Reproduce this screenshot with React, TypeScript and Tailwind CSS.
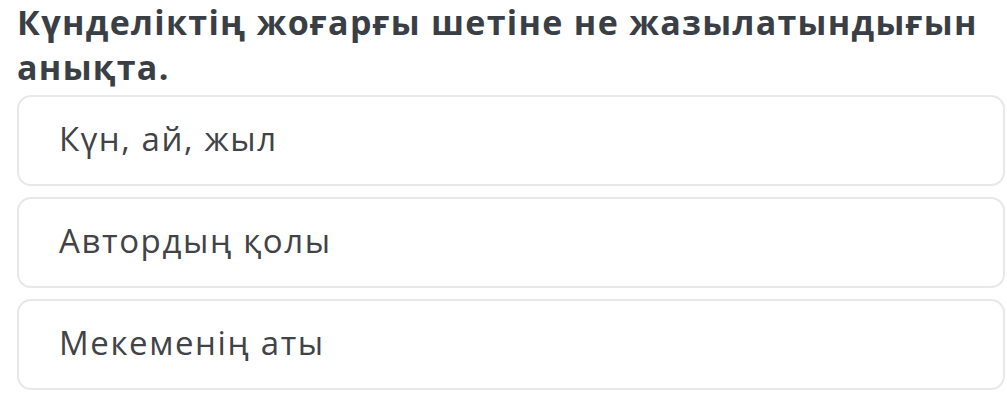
const options = ['Күн, ай, жыл', 'Автордың қолы', 'Мекеменің аты'];

export default function App() {
  return (
    <div className="w-[1007px] h-[407px] bg-white overflow-hidden font-['Open_Sans',sans-serif]">
      <h1 className="pl-[17px] pr-2 text-[34px] leading-[45px] tracking-[1.3px] font-bold text-[#3a3e45]">
        Күнделіктің жоғарғы шетіне не жазылатындығын анықта.
      </h1>
      <div className="flex flex-col gap-[11px] mt-[5px] ml-[17px] w-[988px]">
        {options.map((o) => (
          <div
            key={o}
            className="h-[91px] flex items-center pl-[40px] pb-[4px] border-2 border-[#e8e8e8] rounded-[14px] text-[33px] tracking-[1.6px] text-[#414347]"
          >
            {o}
          </div>
        ))}
      </div>
    </div>
  );
}
